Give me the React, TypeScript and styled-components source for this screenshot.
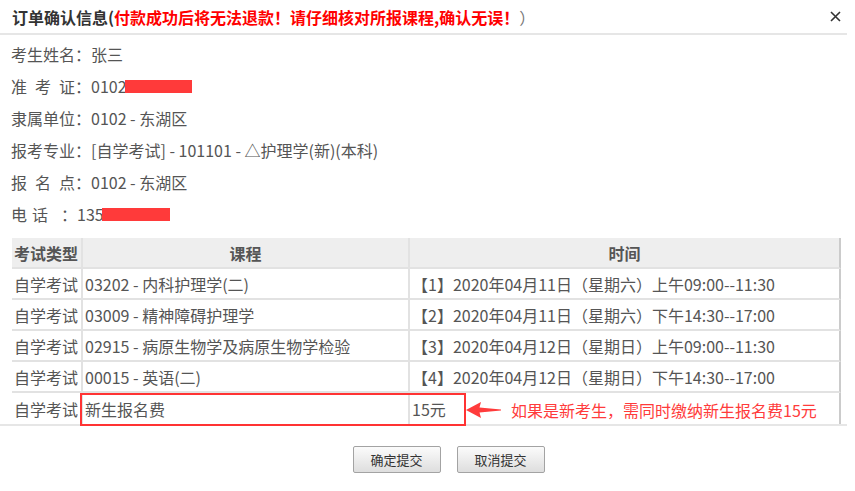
import styled, { createGlobalStyle } from "styled-components";

const GlobalStyle = createGlobalStyle`
  body {
    margin: 0;
    background: #ffffff;
    font-family: "Noto Sans CJK SC", "Liberation Sans", sans-serif;
  }
`;

type Course = { code: string; name: string; time: string };

const courses: Course[] = [
  { code: "03202", name: "内科护理学(二)", time: "【1】2020年04月11日（星期六）上午09:00--11:30" },
  { code: "03009", name: "精神障碍护理学", time: "【2】2020年04月11日（星期六）下午14:30--17:00" },
  { code: "02915", name: "病原生物学及病原生物学检验", time: "【3】2020年04月12日（星期日）上午09:00--11:30" },
  { code: "00015", name: "英语(二)", time: "【4】2020年04月12日（星期日）下午14:30--17:00" },
];

export default function App() {
  return (
    <>
      <GlobalStyle />
      <Dialog>
        <TitleBar>
          <Title>
            订单确认信息(<Warn>付款成功后将无法退款！请仔细核对所报课程,确认无误！</Warn>
            <Tail>）</Tail>
          </Title>
          <Close aria-label="close">
            <svg width="11" height="11" viewBox="0 0 11 11">
              <path d="M1 1 L10 10 M10 1 L1 10" stroke="#333" strokeWidth="1.6" fill="none" />
            </svg>
          </Close>
        </TitleBar>

        <InfoList>
          <InfoRow>
            <Label $w={64}>考生姓名</Label>
            <Colon>：</Colon>张三
          </InfoRow>
          <InfoRow>
            <Label $w={64}>准考证</Label>
            <Colon>：</Colon>0102
            <Redact $w={67} />
          </InfoRow>
          <InfoRow>
            <Label $w={64}>隶属单位</Label>
            <Colon>：</Colon>0102 - 东湖区
          </InfoRow>
          <InfoRow>
            <Label $w={64}>报考专业</Label>
            <Colon>：</Colon>[自学考试] - 101101 - △护理学(新)(本科)
          </InfoRow>
          <InfoRow>
            <Label $w={64}>报名点</Label>
            <Colon>：</Colon>0102 - 东湖区
          </InfoRow>
          <InfoRow>
            <Label $w={37}>电话</Label>
            <Colon $gap={13}>：</Colon>135
            <Redact $w={68} />
          </InfoRow>
        </InfoList>

        <TableArea>
          <Table>
            <colgroup>
              <col style={{ width: 71 }} />
              <col style={{ width: 327 }} />
              <col style={{ width: 431 }} />
            </colgroup>
            <thead>
              <tr>
                <Th>考试类型</Th>
                <Th $center>课程</Th>
                <Th $center>时间</Th>
              </tr>
            </thead>
            <tbody>
              {courses.map((c) => (
                <tr key={c.code}>
                  <Td>自学考试</Td>
                  <Td>
                    {c.code} - {c.name}
                  </Td>
                  <Td>{c.time}</Td>
                </tr>
              ))}
              <tr>
                <Td $last>自学考试</Td>
                <Td $last>新生报名费</Td>
                <Td $last>15元</Td>
              </tr>
            </tbody>
          </Table>

          <Callout>
            <Highlight />
            <svg width="36" height="20" viewBox="0 0 36 20">
              <path d="M0 10 L15 2 L13.5 7.6 L35 9.4 L35 10.6 L13.5 12.4 L15 18 Z" fill="#ff3b3b" />
            </svg>
            <Note>如果是新考生，需同时缴纳新生报名费15元</Note>
          </Callout>
        </TableArea>

        <Footer>
          <Button>确定提交</Button>
          <Button>取消提交</Button>
        </Footer>
      </Dialog>
    </>
  );
}

const Dialog = styled.div`
  width: 847px;
  color: #555;
`;

const TitleBar = styled.div`
  height: 33px;
  display: flex;
  align-items: center;
  justify-content: space-between;
  padding: 0 6px 0 12px;
  border-bottom: 2px solid #e6e6e6;
`;

const Title = styled.div`
  font-size: 16px;
  line-height: 20px;
  font-weight: bold;
  color: #333;
  white-space: nowrap;
`;

const Warn = styled.span`
  color: #ff0000;
`;

const Tail = styled.span`
  color: #777;
  font-weight: normal;
`;

const Close = styled.div`
  display: flex;
  align-items: center;
  margin-top: -1px;
`;

const InfoList = styled.div`
  padding: 3px 0 0 11px;
`;

const InfoRow = styled.div`
  height: 32px;
  display: flex;
  align-items: center;
  font-size: 16px;
  line-height: 20px;
  color: #555;
  white-space: pre;
`;

const Label = styled.span<{ $w: number }>`
  display: inline-block;
  width: ${(p) => p.$w}px;
  text-align: justify;
  text-align-last: justify;
`;

const Colon = styled.span<{ $gap?: number }>`
  display: inline-block;
  width: 16px;
  margin-left: ${(p) => p.$gap ?? 0}px;
`;

const Redact = styled.span<{ $w: number }>`
  display: inline-block;
  width: ${(p) => p.$w}px;
  height: 13px;
  margin-left: -2px;
  background: #ff3a3a;
`;

const TableArea = styled.div`
  position: relative;
  margin-top: 8px;
  padding: 0 6px 0 12px;
  border-bottom: 2px solid #e6e6e6;
`;

const Table = styled.table`
  width: 829px;
  table-layout: fixed;
  border-collapse: separate;
  border-spacing: 0;
  font-size: 16px;
  line-height: 20px;

  tr {
    height: 31px;
  }
  th:last-child,
  td:last-child {
    border-right: 2px solid #cbcbcb;
  }
`;

const Th = styled.th<{ $center?: boolean }>`
  background: #eeeeee;
  font-weight: bold;
  color: #555;
  text-align: ${(p) => (p.$center ? "center" : "left")};
  padding: 0 2px;
  white-space: nowrap;
  border-right: 2px solid #e2e2e2;
  border-bottom: 2px solid #e2e2e2;
`;

const Td = styled.td<{ $last?: boolean }>`
  color: #555;
  padding: 0 2px;
  white-space: nowrap;
  overflow: hidden;
  border-right: 2px solid #e2e2e2;
  border-bottom: ${(p) => (p.$last ? "none" : "2px solid #e2e2e2")};
`;

const Callout = styled.div`
  position: absolute;
  left: 80px;
  top: 155px;
  display: flex;
  align-items: center;
`;

const Highlight = styled.div`
  width: 386px;
  height: 33px;
  box-sizing: border-box;
  border: 2px solid #ff3333;
`;

const Note = styled.span`
  margin-left: 9px;
  font-size: 16px;
  line-height: 20px;
  color: #ff3b3b;
  white-space: nowrap;
`;

const Footer = styled.div`
  display: flex;
  justify-content: center;
  gap: 16px;
  padding: 20px 0 0 50px;
`;

const Button = styled.button`
  width: 88px;
  height: 27px;
  padding: 0;
  border: 1px solid #a3a3a3;
  border-radius: 2px;
  background: linear-gradient(#fbfbfb, #dedede);
  font-family: "Noto Sans CJK SC", sans-serif;
  font-size: 13px;
  color: #333;
  cursor: pointer;
`;
